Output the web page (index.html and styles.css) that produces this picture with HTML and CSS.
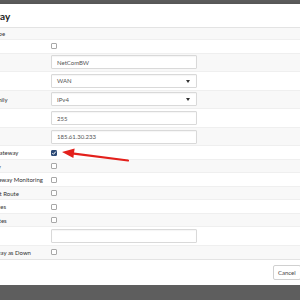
FILE: index.html
```html
<!DOCTYPE html>
<html lang="en">
<head>
    <meta charset="UTF-8">
    <meta name="viewport" content="width=device-width, initial-scale=1.0">
    <title>Edit Gateway</title>
    <link rel="stylesheet" href="styles.css">
</head>
<body>

    <div class="modal">
        <div class="modal-header">
            <h4>Edit Gateway</h4>
        </div>

        <div class="modal-body">
            <!-- cabecera de la tabla -->
            <div class="row head"><div class="label">Gateway Type</div></div>

            <div class="row check-row">
                <div class="label">Disabled</div>
                <div class="field"><span class="check"></span></div>
            </div>
            <div class="row input-row">
                <div class="label">Name</div>
                <div class="field"><input type="text" value="NetComBW"></div>
            </div>
            <div class="row input-row">
                <div class="label">Interface</div>
                <div class="field"><div class="select">WAN</div></div>
            </div>
            <div class="row input-row">
                <div class="label">Address Family</div>
                <div class="field"><div class="select">IPv4</div></div>
            </div>
            <div class="row input-row">
                <div class="label">Priority</div>
                <div class="field"><input type="text" value="255"></div>
            </div>
            <div class="row input-row">
                <div class="label">IP Address</div>
                <div class="field"><input type="text" value="185.61.30.233"></div>
            </div>
            <div class="row check-row">
                <div class="label">Upstream Gateway</div>
                <div class="field">
                    <span class="check on">
                        <svg viewBox="0 0 6 6" width="6" height="6"><path d="M1.3 3.1 L2.5 4.3 L4.8 1.6" fill="none" stroke="#fff" stroke-width="1"/></svg>
                    </span>
                </div>
            </div>
            <div class="row check-row">
                <div class="label">Far Gateway</div>
                <div class="field"><span class="check"></span></div>
            </div>
            <div class="row check-row">
                <div class="label">Disable Gateway Monitoring</div>
                <div class="field"><span class="check"></span></div>
            </div>
            <div class="row check-row">
                <div class="label">Disable Host Route</div>
                <div class="field"><span class="check"></span></div>
            </div>
            <div class="row check-row">
                <div class="label">Failover States</div>
                <div class="field"><span class="check"></span></div>
            </div>
            <div class="row check-row">
                <div class="label">Failback States</div>
                <div class="field"><span class="check"></span></div>
            </div>
            <div class="row input-row">
                <div class="label">Monitor IP</div>
                <div class="field"><input type="text" value=""></div>
            </div>
            <div class="row check-row">
                <div class="label">Mark Gateway as Down</div>
                <div class="field"><span class="check"></span></div>
            </div>
        </div>

        <div class="modal-footer">
            <button class="btn">Cancel</button>
            <button class="btn primary">Save</button>
        </div>
    </div>

    <!-- flecha roja que señala la casilla marcada -->
    <svg class="arrow" width="300" height="300" viewBox="0 0 300 300">
        <line x1="128" y1="160.5" x2="72" y2="153.3" stroke="#e3201b" stroke-width="2.2" stroke-linecap="round"/>
        <polygon points="62,152 74.6,148.6 73.4,158" fill="#e3201b"/>
    </svg>

</body>
</html>
```

FILE: styles.css
```css
html, body {
    overflow: hidden;
}
body {
    margin: 0;
    background-color: #5e5e5e;
    font-family: Lato, "Liberation Sans", sans-serif;
    font-size: 6px;
    color: #333;
}
.modal {
    margin: 4px 0 0 -64px;
    width: 405px;
    background-color: #fff;
    box-shadow: 0 2px 6px rgba(0, 0, 0, 0.35);
}
.modal-header {
    height: 24px;
    padding: 0 15px;
    border-bottom: 1px solid #e3e3e3;
    box-sizing: border-box;
    display: flex;
    align-items: center;
}
.modal-header h4 {
    margin: 0;
    font-size: 10px;
    font-weight: bold;
    color: #222;
}
.modal-body {
    padding: 0 16px;
}
.row {
    display: grid;
    grid-template-columns: 99px 146px 1fr;
    align-items: center;
    box-sizing: border-box;
    border-top: 1px solid #efefef;
}
.row:nth-child(odd) {
    background-color: #f8f8f8;
}
.row.head {
    height: 11px;
    border-top: none;
}
.check-row {
    height: 13.5px;
}
.input-row {
    height: 18.6px;
}
.label {
    padding-left: 16px;
    white-space: nowrap;
}
.field {
    display: flex;
    align-items: center;
}
.field input,
.select {
    width: 146px;
    height: 14px;
    box-sizing: border-box;
    border: 1px solid #d9d9d9;
    border-radius: 1px;
    padding: 0 5px;
    margin: 0;
    font-family: inherit;
    font-size: 6px;
    color: #555;
    background-color: #fff;
    box-shadow: inset 0 1px 1px rgba(0, 0, 0, 0.04);
    outline: none;
}
.select {
    display: flex;
    align-items: center;
    position: relative;
}
.select::after {
    content: "";
    position: absolute;
    right: 6px;
    top: 5px;
    border-left: 2px solid transparent;
    border-right: 2px solid transparent;
    border-top: 3px solid #333;
}
.check {
    width: 6px;
    height: 6px;
    box-sizing: border-box;
    border: 1px solid #a8a8a8;
    border-radius: 1px;
    background-color: #fff;
    display: flex;
}
.check.on {
    background-color: #2c4a76;
    border-color: #2c4a76;
}
.check svg {
    margin: -1px;
}
.modal-footer {
    border-top: 1px solid #e3e3e3;
    padding: 5px 15px;
    display: flex;
    justify-content: flex-end;
    gap: 3px;
}
.btn {
    height: 15px;
    padding: 0 4px;
    border: 1px solid #d0d0d0;
    border-radius: 2px;
    background-color: #fff;
    font-family: inherit;
    font-size: 6px;
    color: #444;
}
.btn.primary {
    background-color: #337ab7;
    border-color: #2e6da4;
    color: #fff;
}
.arrow {
    position: absolute;
    top: 0;
    left: 0;
    pointer-events: none;
}
```
